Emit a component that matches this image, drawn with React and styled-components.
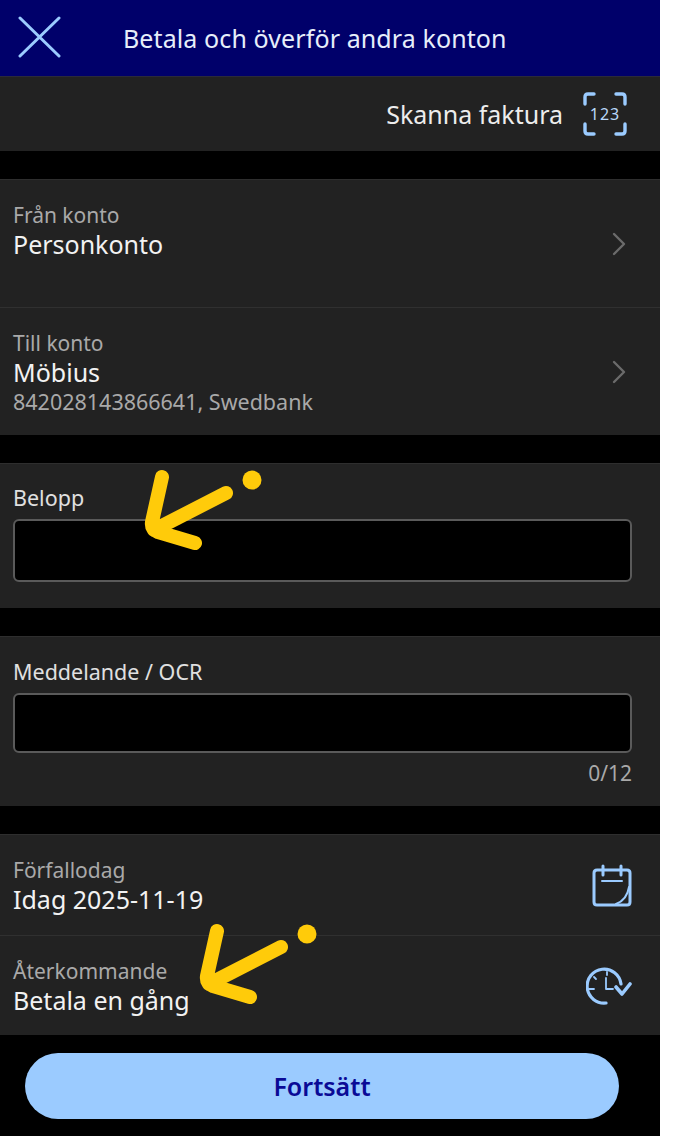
import React from "react";
import styled, { createGlobalStyle } from "styled-components";

const Global = createGlobalStyle`
  html, body { margin: 0; padding: 0; background: #fff; }
  body { font-family: "Noto Sans", "Open Sans", sans-serif; }
`;

const Screen = styled.div`
  position: relative;
  width: 660px;
  height: 1136px;
  background: #000;
  overflow: hidden;
`;

const Header = styled.header`
  height: 76px;
  background: #00006a;
  border-bottom: 1px solid #2a2a3a;
  display: flex;
  align-items: center;
  padding-left: 18px;
  gap: 61px;
  color: #e6eefa;
  font-size: 25px;
  letter-spacing: 0.1px;
`;

const ScanRow = styled.div`
  height: 74px;
  background: #222;
  display: flex;
  align-items: center;
  justify-content: flex-end;
  gap: 20px;
  padding-right: 33px;
  color: #ededed;
  font-size: 25px;
`;

const Section = styled.section`
  background: #222;
  margin-top: ${(props) => props.$gap || 28}px;
  border-top: 1px solid #2e2e2e;
`;

const Row = styled.div`
  height: ${(props) => props.$height}px;
  box-sizing: border-box;
  padding: ${(props) => props.$top}px 28px 0 13px;
  display: flex;
  justify-content: space-between;
  align-items: ${(props) => (props.$center ? "center" : "flex-start")};
  & + & {
    border-top: 1px solid #303030;
  }
`;

const Label = styled.div`
  color: #a9a9a9;
  font-size: 21px;
  line-height: 28px;
`;

const Value = styled.div`
  color: #f2f2f2;
  font-size: 25px;
  line-height: 30px;
`;

const Sub = styled.div`
  color: #a9a9a9;
  font-size: 21.5px;
  line-height: 29px;
`;

const Field = styled.div`
  padding: ${(props) => props.$top}px 28px 0 13px;
  height: ${(props) => props.$height}px;
  box-sizing: border-box;
`;

const FieldLabel = styled.div`
  color: #e0e0e0;
  font-size: 21.5px;
  line-height: 28px;
  margin-bottom: 7px;
`;

const Input = styled.div`
  height: ${(props) => props.$height}px;
  box-sizing: border-box;
  background: #000;
  border: 2px solid #5a5a5a;
  border-radius: 6px;
`;

const Counter = styled.div`
  color: #a9a9a9;
  font-size: 21px;
  line-height: 28px;
  text-align: right;
  margin-top: 6px;
`;

const Footer = styled.div`
  padding: 18px 41px 0 25px;
`;

const Button = styled.button`
  display: block;
  width: 100%;
  height: 66px;
  border: 0;
  border-radius: 33px;
  background: #9bcbff;
  color: #0a0a96;
  font-family: inherit;
  font-size: 25px;
  font-weight: 600;
`;

const Mark = styled.svg`
  position: absolute;
  left: ${(props) => props.$x}px;
  top: ${(props) => props.$y}px;
`;

const Close = () => (
  <svg width="44" height="44" viewBox="0 0 44 44" fill="none" stroke="#9bcbff" strokeWidth="3" strokeLinecap="round">
    <path d="M2 2 L41 40 M41 2 L2 40" />
  </svg>
);

const ScanIcon = () => (
  <svg width="44" height="44" viewBox="0 0 44 44" fill="none" stroke="#9bcbff" strokeWidth="3.4" strokeLinecap="round">
    <path d="M2 12 V5 Q2 2 5 2 H11 M33 2 H39 Q42 2 42 5 V12 M2 32 V39 Q2 42 5 42 H11 M33 42 H39 Q42 42 42 39 V32" />
    <text x="22" y="28" textAnchor="middle" fill="#b8d8fa" stroke="none" fontSize="16" letterSpacing="1" fontFamily="Noto Sans">123</text>
  </svg>
);

const Chevron = () => (
  <svg width="16" height="24" viewBox="0 0 16 24" fill="none" stroke="#6b6b6b" strokeWidth="2.4" strokeLinecap="round" strokeLinejoin="round">
    <path d="M3 2 L13 12 L3 22" />
  </svg>
);

const CalendarIcon = () => (
  <svg width="40" height="44" viewBox="0 0 40 44" fill="none" stroke="#9bcbff" strokeWidth="3" strokeLinecap="round" strokeLinejoin="round">
    <path d="M5 6 H35 Q38 6 38 9 V38 Q38 41 35 41 H5 Q2 41 2 38 V9 Q2 6 5 6 Z" />
    <path d="M11 2 V11 M29 2 V11" />
    <path d="M10 17 H30" strokeWidth="2" />
    <path d="M24 40 Q35 36 37 23" strokeWidth="2" />
  </svg>
);

const RecurringIcon = () => (
  <svg width="46" height="42" viewBox="0 0 46 42" fill="none" stroke="#9bcbff" strokeLinecap="round" strokeLinejoin="round">
    <path d="M35 19 A17 17 0 1 0 20 38" strokeWidth="3.2" />
    <path d="M30 22 L36 29 L44 19" strokeWidth="3.6" />
    <path d="M21 7 V10 M8 12 L10 14 M3 24 H8" strokeWidth="1.8" />
    <path d="M20 13 V24 H27" strokeWidth="1.8" />
  </svg>
);

const Arrow = ({ x, y }) => (
  <Mark $x={x} $y={y} width="124" height="92" viewBox="0 0 124 92" fill="none">
    <path d="M84 30 L12 67 M20 14 L10 59 Q9 66 16 69 L53 80" stroke="#ffcb0a" strokeWidth="14" strokeLinecap="round" strokeLinejoin="round" transform="translate(0 -3)" />
    <circle cx="110" cy="14" r="9.5" fill="#ffcb0a" />
  </Mark>
);

export default function App() {
  return (
    <>
      <Global />
      <Screen>
        <Header>
          <Close />
          <span>Betala och överför andra konton</span>
        </Header>
        <ScanRow>
          <span>Skanna faktura</span>
          <ScanIcon />
        </ScanRow>
        <Section>
          <Row $height={127} $top={21} $center={false}>
            <div>
              <Label>Från konto</Label>
              <Value>Personkonto</Value>
            </div>
            <ChevronSlot><Chevron /></ChevronSlot>
          </Row>
          <Row $height={128} $top={21}>
            <div>
              <Label>Till konto</Label>
              <Value>Möbius</Value>
              <Sub>842028143866641, Swedbank</Sub>
            </div>
            <ChevronSlot><Chevron /></ChevronSlot>
          </Row>
        </Section>
        <Section>
          <Field $height={144} $top={20}>
            <FieldLabel>Belopp</FieldLabel>
            <Input $height={63} />
          </Field>
        </Section>
        <Section>
          <Field $height={169} $top={21}>
            <FieldLabel>Meddelande / OCR</FieldLabel>
            <Input $height={60} />
            <Counter>0/12</Counter>
          </Field>
        </Section>
        <Section>
          <Row $height={100} $top={21}>
            <div>
              <Label>Förfallodag</Label>
              <Value>Idag 2025-11-19</Value>
            </div>
            <IconSlot><CalendarIcon /></IconSlot>
          </Row>
          <Row $height={100} $top={21}>
            <div>
              <Label>Återkommande</Label>
              <Value>Betala en gång</Value>
            </div>
            <IconSlot><RecurringIcon /></IconSlot>
          </Row>
        </Section>
        <Footer>
          <Button>Fortsätt</Button>
        </Footer>
        <Arrow x={142} y={466} />
        <Arrow x={197} y={920} />
      </Screen>
    </>
  );
}

const ChevronSlot = styled.div`
  padding: 31px 5px 0 0;
`;

const IconSlot = styled.div`
  padding: 8px 0 0 0;
`;
